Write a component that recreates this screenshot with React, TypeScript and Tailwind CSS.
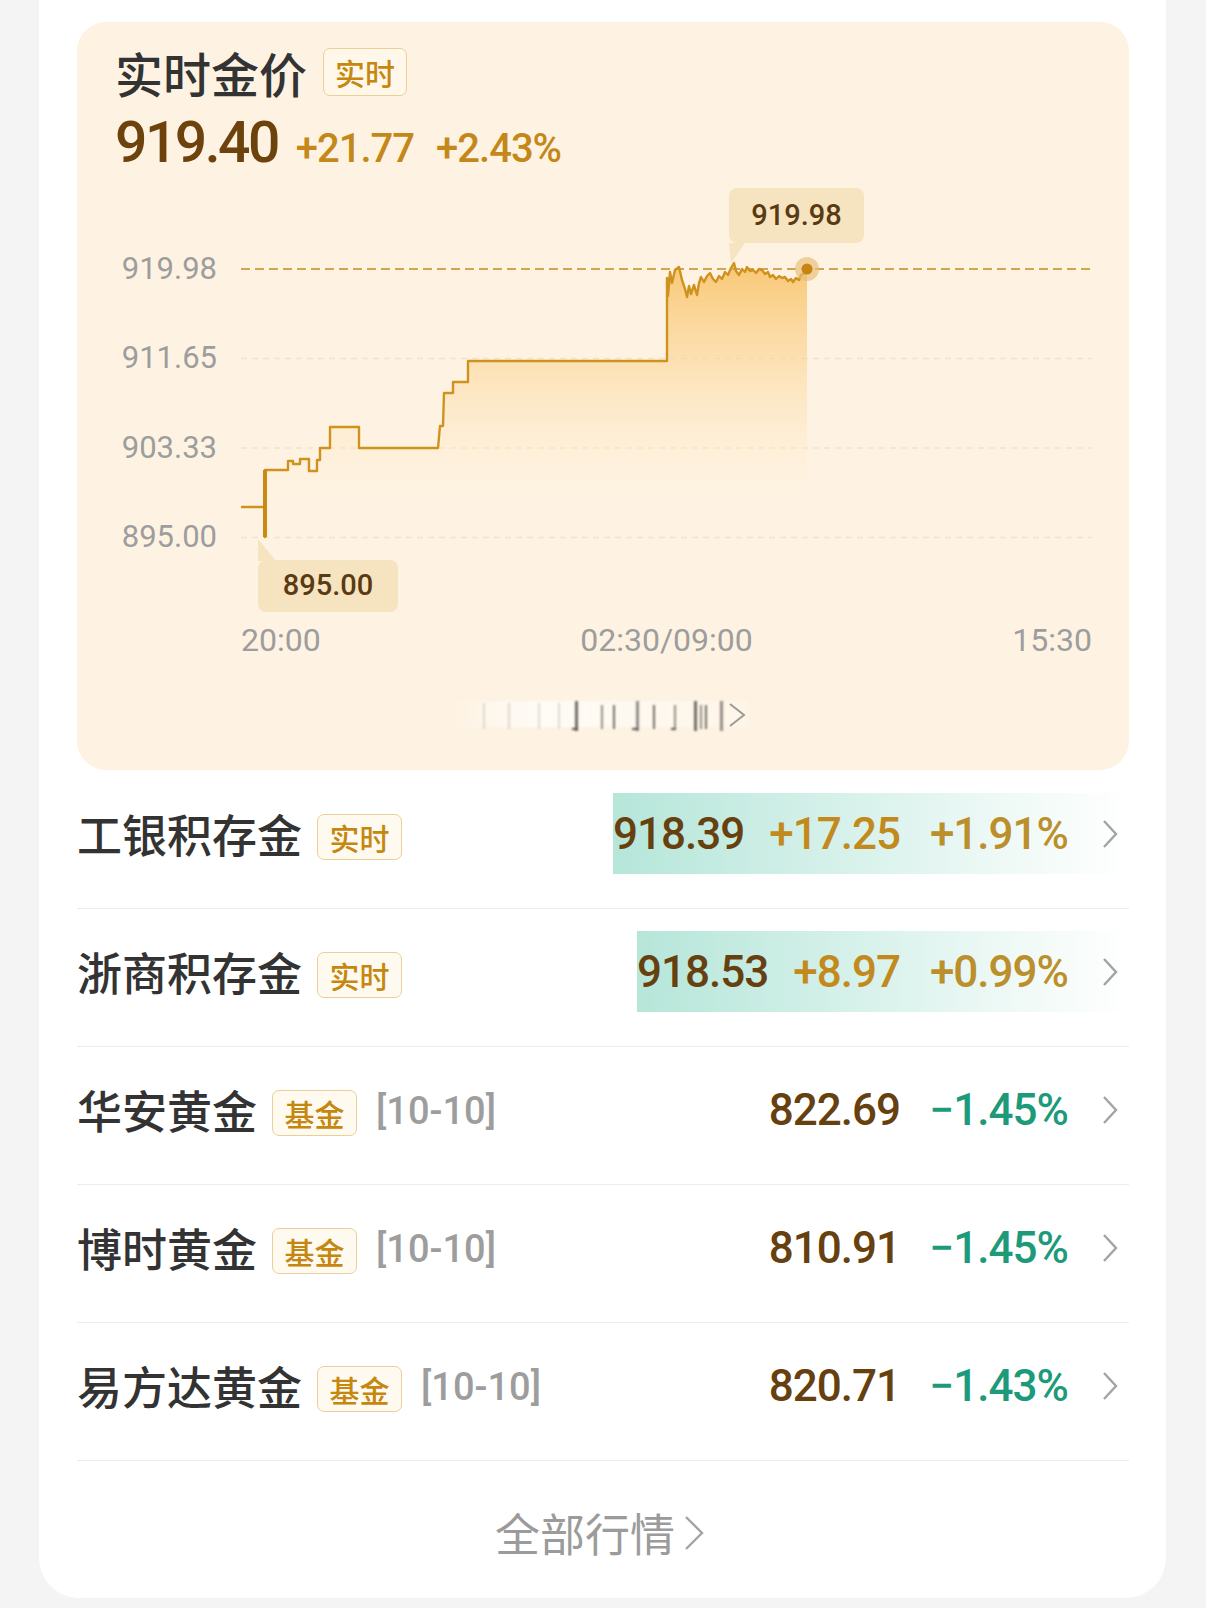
import React from "react";

const NUM = "font-['Roboto','Noto_Sans_CJK_SC',sans-serif]";
const CJK = "font-['Noto_Sans_CJK_SC','Noto_Sans',sans-serif]";

const pts: [number, number][] = [
  [0, 283], [24, 283], [24, 313], [24, 246], [47, 246], [47, 237], [52, 237], [52, 240], [59, 240], [59, 235],
  [68, 235], [68, 247], [76, 247], [76, 236], [79, 236], [79, 224], [89, 224], [89, 203], [118, 203], [118, 224],
  [197, 224], [199, 202], [202, 202], [203, 169], [212, 169], [212, 158], [227, 158], [227, 137], [426, 137],
  [426, 54], [427, 72], [429, 48], [431, 59], [434, 46], [438, 43], [441, 56], [444, 65], [446, 73], [448, 62],
  [450, 70], [453, 61], [456, 71], [458, 59], [460, 53], [463, 58], [466, 52], [469, 49], [472, 55], [475, 58],
  [478, 52], [481, 55], [484, 48], [487, 51], [490, 44], [493, 39], [495, 47], [498, 51], [501, 45], [504, 48],
  [506, 43], [509, 47], [512, 46], [515, 49], [518, 45], [521, 46], [524, 50], [527, 48], [529, 53], [532, 51],
  [535, 55], [538, 52], [541, 54], [544, 53], [547, 57], [550, 55], [552, 58], [555, 54], [558, 56], [560, 51],
  [563, 49], [566, 45],
];
const lineD = "M" + pts.map((p) => p.join(",")).join(" L");
const fillD = lineD + " L566,313 L0,313 Z";

type Row = {
  name: string;
  tag: string;
  date?: string;
  price: string;
  chg?: string;
  pct: string;
  up: boolean;
  hl: boolean;
};

const rows: Row[] = [
  { name: "工银积存金", tag: "实时", price: "918.39", chg: "+17.25", pct: "+1.91%", up: true, hl: true },
  { name: "浙商积存金", tag: "实时", price: "918.53", chg: "+8.97", pct: "+0.99%", up: true, hl: true },
  { name: "华安黄金", tag: "基金", date: "[10-10]", price: "822.69", pct: "−1.45%", up: false, hl: false },
  { name: "博时黄金", tag: "基金", date: "[10-10]", price: "810.91", pct: "−1.45%", up: false, hl: false },
  { name: "易方达黄金", tag: "基金", date: "[10-10]", price: "820.71", pct: "−1.43%", up: false, hl: false },
];

function Chevron({ className }: { className?: string }) {
  return (
    <svg className={className} width="16" height="30" viewBox="0 0 16 30" fill="none">
      <polyline points="2,2 14,15 2,28" stroke="#a3a3a3" strokeWidth="2.4" strokeLinejoin="miter" />
    </svg>
  );
}

function Artifact() {
  const dark = [127, 153, 165, 188, 205, 226, 246, 252, 257, 272];
  const light = [35, 60, 90, 110];
  return (
    <svg width="310" height="40" viewBox="0 0 310 40">
      <defs>
        <filter id="bl" x="-20%" y="-20%" width="140%" height="140%">
          <feGaussianBlur stdDeviation="0.9" />
        </filter>
        <linearGradient id="smear" x1="0" x2="1" y1="0" y2="0">
          <stop offset="0" stopColor="#ffffff" stopOpacity="0.0" />
          <stop offset="0.3" stopColor="#ffffff" stopOpacity="0.7" />
          <stop offset="1" stopColor="#ffffff" stopOpacity="0.2" />
        </linearGradient>
      </defs>
      <rect x="0" y="6" width="300" height="26" fill="url(#smear)" filter="url(#bl)" />
      <g filter="url(#bl)">
        {light.map((x) => (
          <rect key={x} x={x} y="8" width="2" height="26" fill="#c9c4bd" opacity="0.6" />
        ))}
        {dark.map((x, i) => (
          <rect key={x} x={x} y={i % 3 === 0 ? 6 : 10} width={i % 3 === 0 ? 3 : 2} height={i % 3 === 0 ? 30 : 24} fill="#5a5652" opacity={0.85 - (i % 2) * 0.2} />
        ))}
        <path d="M124,34 L130,34 M184,34 L190,34 M223,34 L228,34" stroke="#5a5652" strokeWidth="2" />
      </g>
      <polyline points="282,9 296,20 282,31" fill="none" stroke="#9d9a96" strokeWidth="2" />
    </svg>
  );
}

function Chart() {
  const grid = [134.5, 224, 313.5];
  return (
    <div className="relative ml-[24px] h-[358px] w-[851px]">
      <svg width="851" height="358" viewBox="0 0 851 358" className="absolute left-0 top-0 overflow-visible">
        <defs>
          <linearGradient id="fillg" gradientUnits="userSpaceOnUse" x1="0" y1="45" x2="0" y2="290">
            <stop offset="0" stopColor="#f8c46c" stopOpacity="0.9" />
            <stop offset="0.4" stopColor="#fbd699" stopOpacity="0.6" />
            <stop offset="0.75" stopColor="#fde9c8" stopOpacity="0.35" />
            <stop offset="1" stopColor="#fef3e2" stopOpacity="0" />
          </linearGradient>
        </defs>
        {grid.map((y) => (
          <line key={y} x1="0" x2="851" y1={y} y2={y} stroke="#f3e3c6" strokeWidth="1.5" strokeDasharray="6 5" />
        ))}
        <path d={fillD} fill="url(#fillg)" />
        <line x1="0" x2="851" y1="45" y2="45" stroke="#d5a44e" strokeWidth="2" strokeDasharray="9 5" />
        <path d={lineD} fill="none" stroke="#d0921f" strokeWidth="2.4" strokeLinejoin="round" />
        <line x1="24" x2="24" y1="246" y2="313" stroke="#c98a14" strokeWidth="4" />
        <circle cx="566" cy="45" r="12" fill="#e6bd78" opacity="0.65" />
        <circle cx="566" cy="45" r="5.5" fill="#c8840f" />
      </svg>

      <div className="absolute left-[488px] top-[-36px]">
        <div className={`flex h-[55px] w-[135px] items-center justify-center rounded-[8px] bg-[#f6e3bf] text-[29px] font-medium text-[#5a3a12] ${NUM}`}>
          919.98
        </div>
        <svg width="16" height="20" viewBox="0 0 16 20" className="absolute left-0 top-[55px]">
          <polygon points="0,0 16,0 2,20" fill="#f6e3bf" />
        </svg>
      </div>

      <div className="absolute left-[17px] top-[336px]">
        <svg width="18" height="22" viewBox="0 0 18 22" className="absolute left-0 top-[-21px]">
          <polygon points="0,0 18,22 0,22" fill="#f6e3bf" />
        </svg>
        <div className={`flex h-[52px] w-[140px] items-center justify-center rounded-[8px] bg-[#f6e3bf] text-[29px] font-medium text-[#5a3a12] ${NUM}`}>
          895.00
        </div>
      </div>
    </div>
  );
}

export default function App() {
  return (
    <div className="min-h-[1608px] w-full bg-[#f4f4f4] pb-[10px]">
      <div className={`ml-[39px] w-[1127px] rounded-b-[40px] bg-white pl-[38px] pr-[37px] pt-[22px] ${CJK}`}>
        {/* Panel */}
        <div className="h-[748px] w-[1052px] rounded-[29px] bg-[#fef3e2] pt-[22px]">
          <div className="flex h-[56px] items-center pl-[38px]">
            <span className="text-[48px] font-medium leading-[56px] text-[#333333]">实时金价</span>
            <span className="ml-[16px] flex h-[48px] w-[84px] items-center justify-center rounded-[7px] border border-[#ebcf98] bg-[#fff8ea] text-[30px] font-medium leading-none text-[#c5870f]">
              实时
            </span>
          </div>
          <div className={`mt-[13px] flex h-[60px] items-baseline pl-[38px] ${NUM}`}>
            <span className="text-[57px] font-medium leading-[60px] tracking-[-2.5px] text-[#6e420c]">919.40</span>
            <span className="ml-[18px] text-[40px] font-medium tracking-[-1px] text-[#c4881a]">+21.77</span>
            <span className="ml-[22px] text-[40px] font-medium tracking-[-1px] text-[#c4881a]">+2.43%</span>
          </div>

          <div className={`mt-[51px] flex h-[358px] ${NUM}`}>
            <div className="flex w-[140px] flex-col">
              {["919.98", "911.65", "903.33", "895.00"].map((v) => (
                <div key={v} className="flex h-[89.5px] items-center justify-end text-[31px] text-[#9d9d9d]">
                  {v}
                </div>
              ))}
            </div>
            <Chart />
          </div>

          <div className={`ml-[164px] mt-[38px] flex h-[40px] w-[851px] items-center justify-between text-[32px] leading-[40px] text-[#9d9d9d] ${NUM}`}>
            <span>20:00</span>
            <span>02:30/09:00</span>
            <span>15:30</span>
          </div>

          <div className="mt-[35px] flex justify-center">
            <Artifact />
          </div>
        </div>

        {/* Rows */}
        <div className="mt-[1px]">
          {rows.map((r) => (
            <div key={r.name} className="flex h-[138px] items-center border-b border-[#ececec] pb-[12px]">
              <span className="text-[45px] font-medium leading-none text-[#333333]">{r.name}</span>
              <span className="ml-[15px] mt-[6px] flex h-[46px] w-[85px] items-center justify-center rounded-[7px] border border-[#ebcf98] bg-[#fffaf0] text-[30px] font-medium leading-none text-[#c5870f]">
                {r.tag}
              </span>
              {r.date && (
                <span className={`ml-[19px] mt-[4px] text-[38px] font-medium text-[#9d9d9d] ${NUM}`}>{r.date}</span>
              )}
              <div
                className={`ml-auto flex h-[81px] items-center pr-[11px] ${NUM} ${
                  r.hl
                    ? "bg-[linear-gradient(90deg,#b6e6d9_0%,#d3f0e9_40%,#eef9f6_75%,#ffffff_100%)]"
                    : ""
                }`}
              >
                <span className="text-[44px] font-medium tracking-[-1px] text-[#66400f]">{r.price}</span>
                {r.chg && (
                  <span className="ml-[25px] text-[44px] font-medium tracking-[-1px] text-[#c28a1d]">{r.chg}</span>
                )}
                <span
                  className={`ml-[28px] w-[140px] text-right text-[44px] font-medium tracking-[-1px] ${
                    r.up ? "text-[#bb8f2c]" : "text-[#1d9a7a]"
                  }`}
                >
                  {r.pct}
                </span>
                <Chevron className="ml-[34px]" />
              </div>
            </div>
          ))}
        </div>

        {/* Footer */}
        <div className="flex h-[137px] items-center justify-center pr-[6px] pt-[6px]">
          <span className="text-[45px] leading-none text-[#9b9b9b]">全部行情</span>
          <svg width="22" height="38" viewBox="0 0 22 38" className="ml-[8px]" fill="none">
            <polyline points="3,3 19,19 3,35" stroke="#a3a3a3" strokeWidth="2.4" />
          </svg>
        </div>
      </div>
    </div>
  );
}
